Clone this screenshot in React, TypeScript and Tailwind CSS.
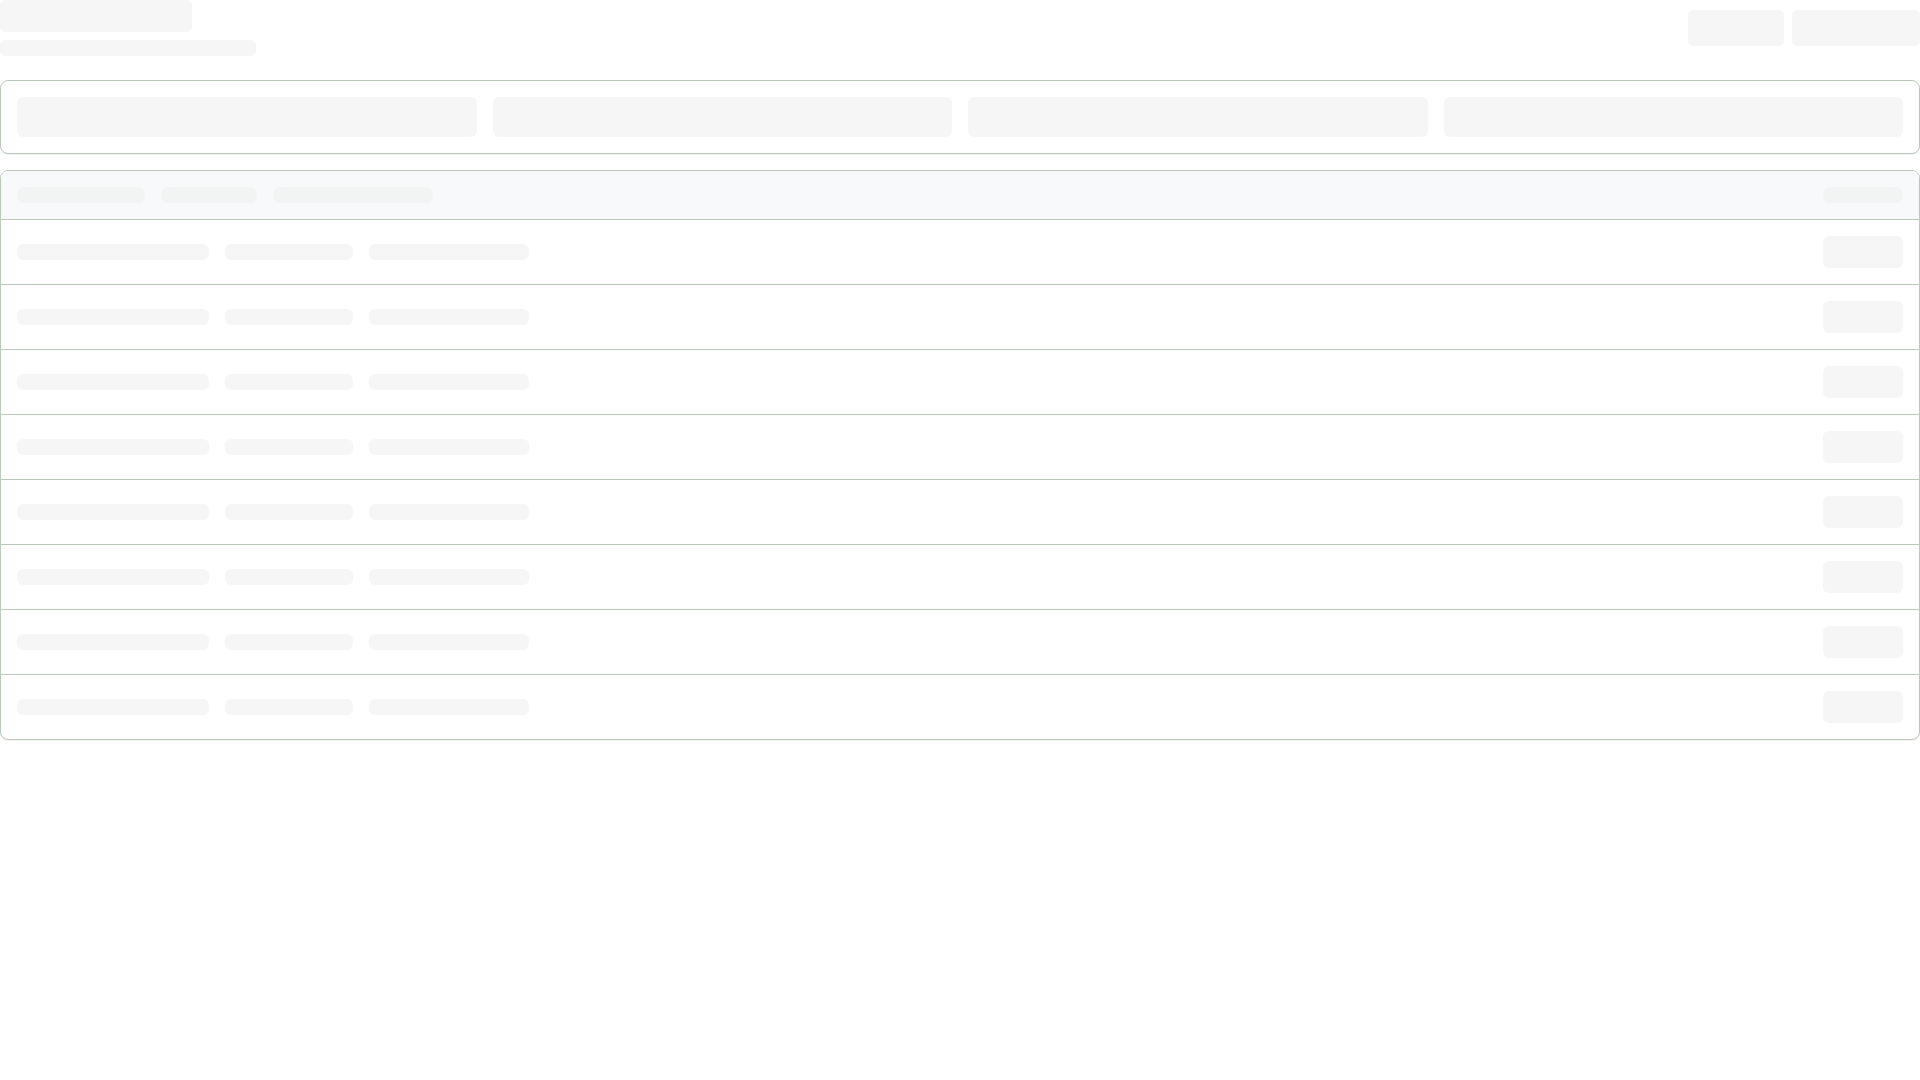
const filterCount = 4;
const rowCount = 8;

function Bar({ className }: { className: string }) {
  return <div className={`rounded-md bg-[#f6f6f6] ${className}`} />;
}

export default function App() {
  return (
    <div className="min-h-screen bg-white font-['Inter',sans-serif]">
      <div className="flex items-center justify-between">
        <div className="flex flex-col gap-2">
          <Bar className="h-8 w-48" />
          <Bar className="h-4 w-64 rounded-lg" />
        </div>
        <div className="flex items-center gap-2">
          <Bar className="h-9 w-24" />
          <Bar className="h-9 w-32" />
        </div>
      </div>

      <div className="mt-6 rounded-lg border border-[#bcc8bb] bg-white p-4 shadow-[0_1px_1px_rgba(0,0,0,0.06)]">
        <div className="grid grid-cols-4 gap-4">
          {Array.from({ length: filterCount }, (_, i) => (
            <Bar key={i} className="h-10" />
          ))}
        </div>
      </div>

      <div className="mt-4 overflow-hidden rounded-lg border border-[#bcc8bb] bg-white shadow-[0_1px_1px_rgba(0,0,0,0.06)]">
        <div className="flex items-center justify-between border-b border-[#bcc8bb] bg-[#f8f9fa] px-4 py-4">
          <div className="flex items-center gap-4">
            <div className="h-4 w-32 rounded-lg bg-[#f2f4f3]" />
            <div className="h-4 w-24 rounded-lg bg-[#f2f4f3]" />
            <div className="h-4 w-40 rounded-lg bg-[#f2f4f3]" />
          </div>
          <div className="h-4 w-20 rounded-lg bg-[#f2f4f3]" />
        </div>
        {Array.from({ length: rowCount }, (_, i) => (
          <div
            key={i}
            className={`flex items-center justify-between px-4 py-4 ${i < rowCount - 1 ? "border-b border-[#bcc8bb]" : ""}`}
          >
            <div className="flex items-center gap-4">
              <Bar className="h-4 w-48 rounded-lg" />
              <Bar className="h-4 w-32 rounded-lg" />
              <Bar className="h-4 w-40 rounded-lg" />
            </div>
            <Bar className="h-8 w-20" />
          </div>
        ))}
      </div>
    </div>
  );
}
